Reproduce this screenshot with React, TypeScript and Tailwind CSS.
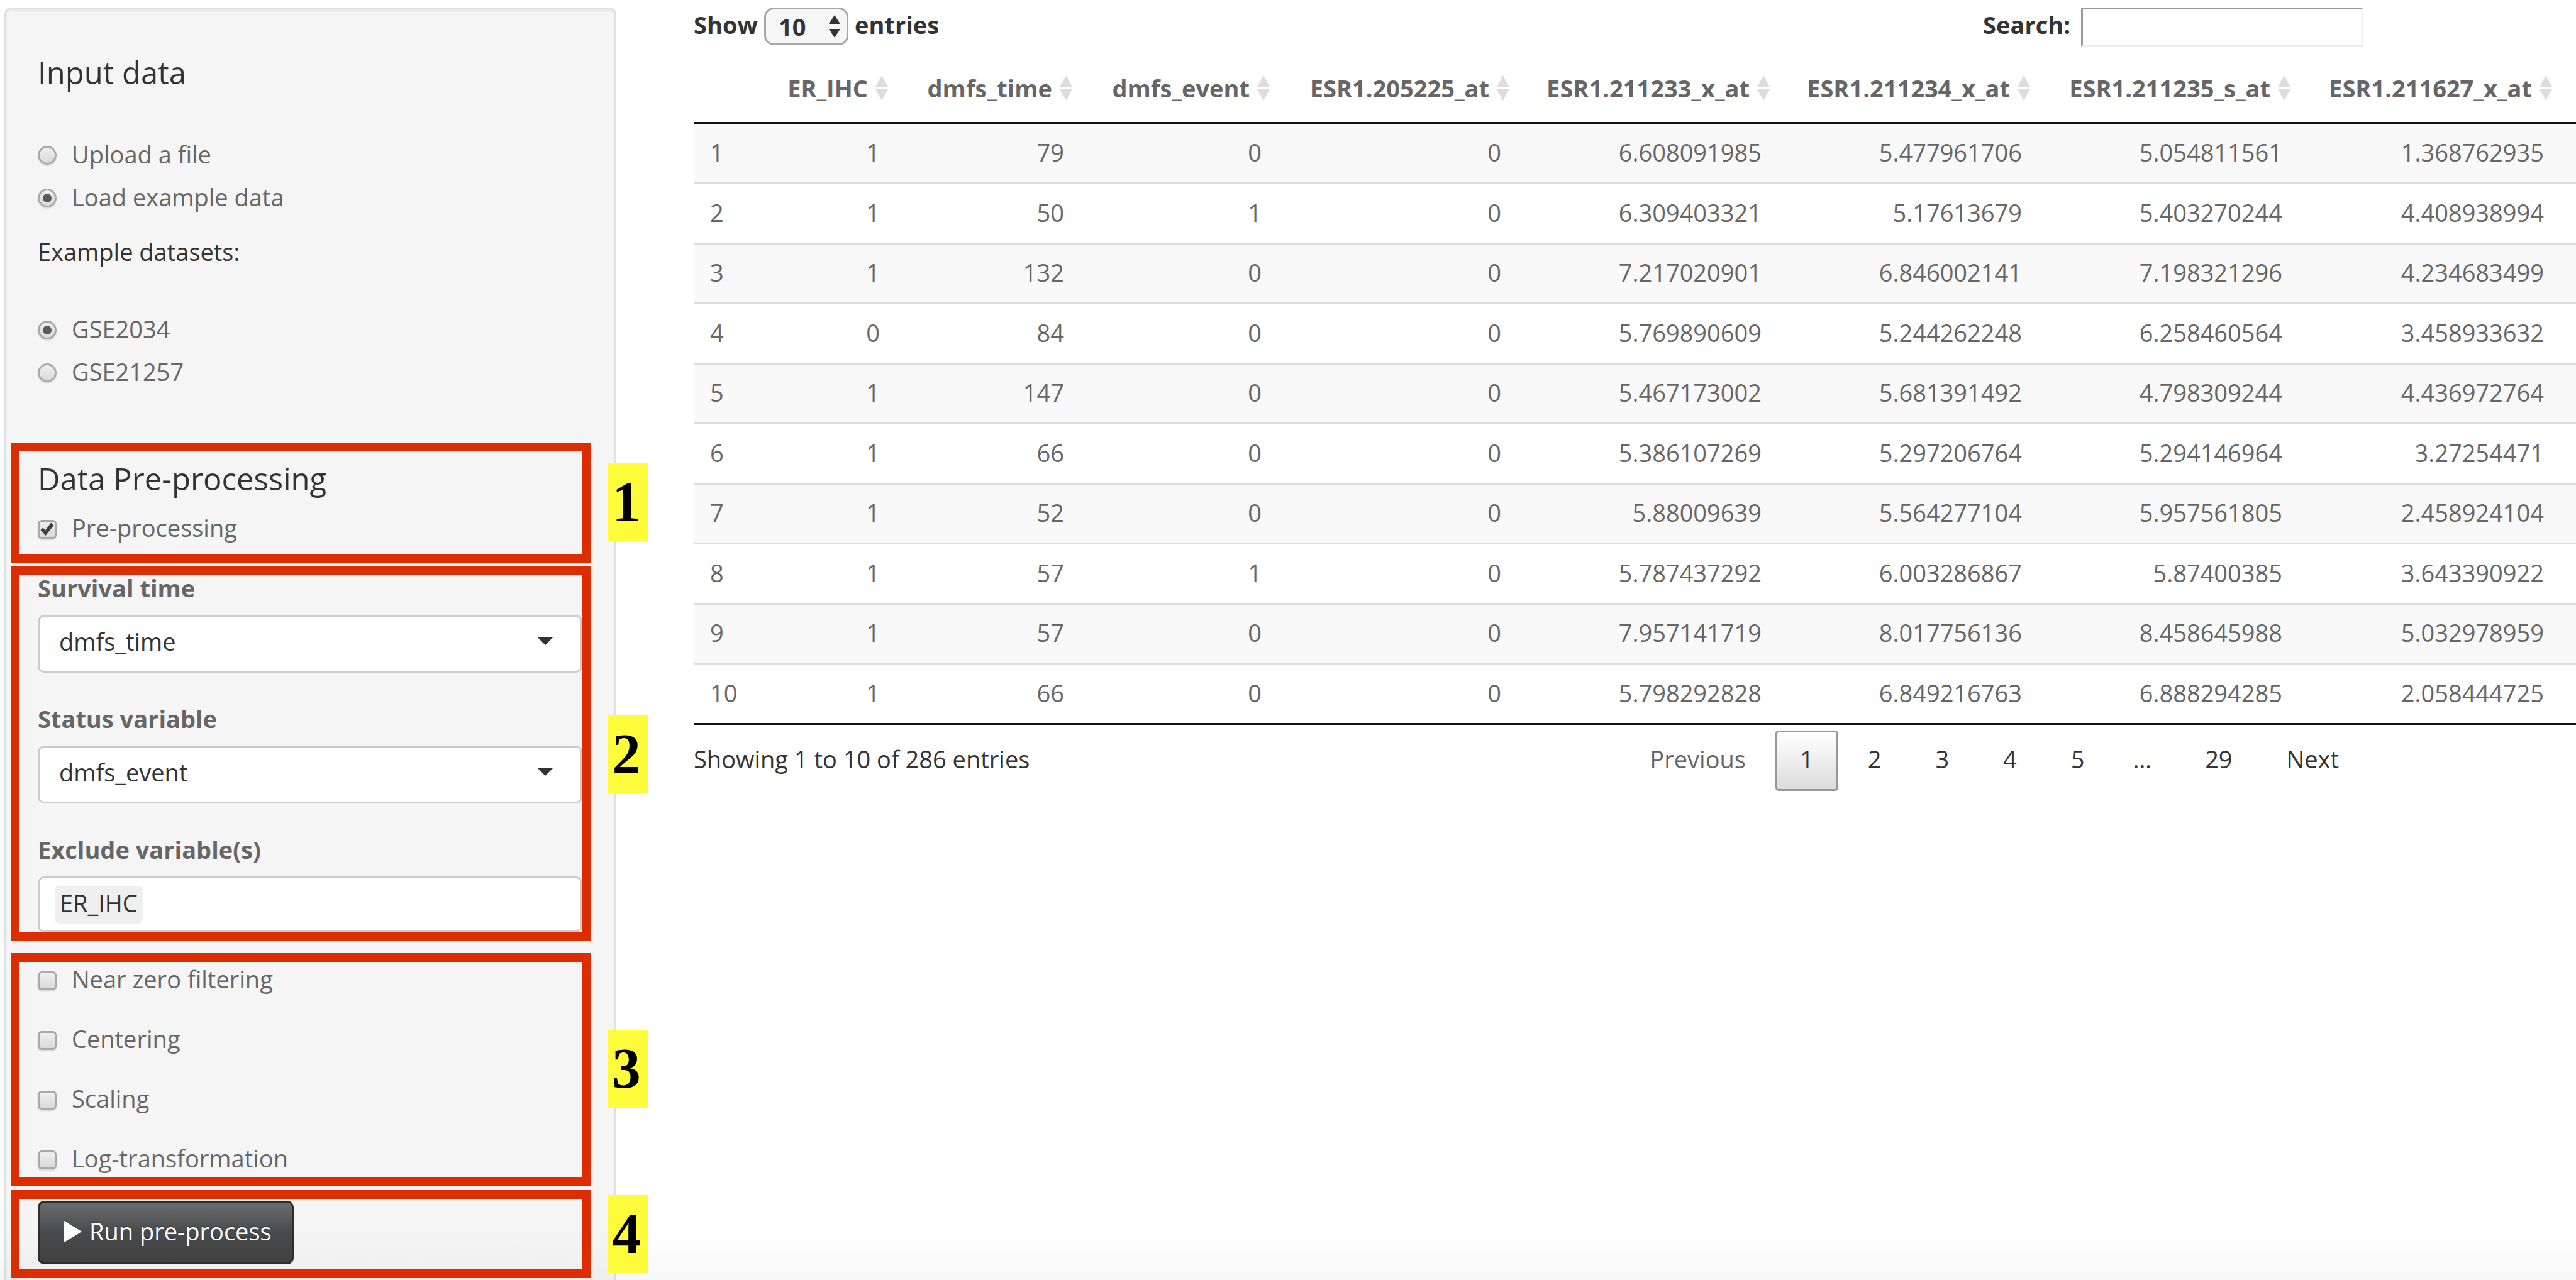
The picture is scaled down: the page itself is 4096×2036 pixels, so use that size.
import { useState, type ReactNode } from "react";

const columns = [
  { name: "ER_IHC", width: "w-[218px]" },
  { name: "dmfs_time", width: "w-[293px]" },
  { name: "dmfs_event", width: "w-[314px]" },
  { name: "ESR1.205225_at", width: "w-[381px]" },
  { name: "ESR1.211233_x_at", width: "w-[414px]" },
  { name: "ESR1.211234_x_at", width: "w-[414px]" },
  { name: "ESR1.211235_s_at", width: "w-[414px]" },
  { name: "ESR1.211627_x_at", width: "w-[416px]" },
];

const rows = [
  ["1", "79", "0", "0", "6.608091985", "5.477961706", "5.054811561", "1.368762935"],
  ["1", "50", "1", "0", "6.309403321", "5.17613679", "5.403270244", "4.408938994"],
  ["1", "132", "0", "0", "7.217020901", "6.846002141", "7.198321296", "4.234683499"],
  ["0", "84", "0", "0", "5.769890609", "5.244262248", "6.258460564", "3.458933632"],
  ["1", "147", "0", "0", "5.467173002", "5.681391492", "4.798309244", "4.436972764"],
  ["1", "66", "0", "0", "5.386107269", "5.297206764", "5.294146964", "3.27254471"],
  ["1", "52", "0", "0", "5.88009639", "5.564277104", "5.957561805", "2.458924104"],
  ["1", "57", "1", "0", "5.787437292", "6.003286867", "5.87400385", "3.643390922"],
  ["1", "57", "0", "0", "7.957141719", "8.017756136", "8.458645988", "5.032978959"],
  ["1", "66", "0", "0", "5.798292828", "6.849216763", "6.888294285", "2.058444725"],
];

function Radio({ name, label, checked, onChange }: { name: string; label: string; checked: boolean; onChange: () => void }) {
  return (
    <label className="flex h-[68px] items-center gap-6 text-[#666]">
      <span className="relative mt-1 block size-[30px]">
        <input
          type="radio"
          name={name}
          checked={checked}
          onChange={onChange}
          className="block size-[30px] appearance-none rounded-full border-3 border-[#a9a9a9] bg-linear-to-b from-[#efefef] to-[#dadada] shadow-[0_2px_2px_rgba(0,0,0,0.12)]"
        />
        {checked && <span className="pointer-events-none absolute inset-[8px] rounded-full bg-[#5c5c5c]" />}
      </span>
      {label}
    </label>
  );
}

function Check({ label, initial = false }: { label: string; initial?: boolean }) {
  const [checked, setChecked] = useState(initial);
  return (
    <label className="flex h-[54px] items-center gap-6 text-[#666]">
      <span className="relative mt-1.5 block size-[30px]">
        <input
          type="checkbox"
          checked={checked}
          onChange={(e) => setChecked(e.target.checked)}
          className="block size-[30px] appearance-none rounded-[6px] border-3 border-[#a9a9a9] bg-linear-to-b from-[#efefef] to-[#dadada] shadow-[0_2px_2px_rgba(0,0,0,0.12)]"
        />
        {checked && (
          <svg viewBox="0 0 30 30" className="pointer-events-none absolute inset-0 size-[30px]">
            <path d="M4.5 16L8.5 12.5L12 16.5L21 4.5L25.5 8.5L12.5 25Z" fill="#404040" />
          </svg>
        )}
      </span>
      {label}
    </label>
  );
}

function Dropdown({ id, label, value }: { id: string; label: string; value: string }) {
  return (
    <div className="mb-[53px]">
      <label htmlFor={id} className="mb-[23px] block font-bold leading-[40px] text-[#666]">
        {label}
      </label>
      <div className="relative">
        <select
          id={id}
          defaultValue={value}
          className="block h-[92px] w-full appearance-none rounded-[10px] border-3 border-[#ccc] bg-white pb-2 pl-[31px] text-[#333]"
        >
          <option>dmfs_time</option>
          <option>dmfs_event</option>
        </select>
        <svg viewBox="0 0 24 12" className="pointer-events-none absolute top-[36px] right-[47px] h-[12px] w-[24px]">
          <path d="M0 0H24L12 12Z" fill="#333" />
        </svg>
      </div>
    </div>
  );
}

function Marked({ number, badge, className, children }: { number: string; badge: string; className: string; children: ReactNode }) {
  return (
    <section className={`relative border-[14px] border-[#dd2c00] pl-[29px] ${className}`}>
      {children}
      <span
        className={`absolute right-[-104px] w-[64px] bg-[#fffc3b] pr-1 text-center font-['Liberation_Serif',serif] text-[91px] leading-[124px] font-bold text-black ${badge}`}
      >
        {number}
      </span>
    </section>
  );
}

function PageButton({ label, current = false, muted = false }: { label: string; current?: boolean; muted?: boolean }) {
  return (
    <button
      type="button"
      className={`ml-2 h-[96px] rounded-[5px] border-3 px-[36px] pb-1.5 ${
        current ? "border-[#979797] bg-linear-to-b from-white to-[#dcdcdc]" : "border-transparent"
      } ${muted ? "text-[#666]" : "text-[#333]"}`}
    >
      {label}
    </button>
  );
}

export default function App() {
  const [source, setSource] = useState("example");
  const [dataset, setDataset] = useState("GSE2034");

  return (
    <div className="relative flex min-h-screen items-stretch overflow-hidden bg-white pl-[7px] font-['Open_Sans',sans-serif] text-[38px] text-[#333]">
      <div className="pointer-events-none absolute inset-x-0 bottom-0 h-[80px] bg-linear-to-b from-transparent to-black/3" />
      <aside className="mt-3 w-[973px] shrink-0 rounded-t-[10px] border-3 border-b-0 border-[#e1e1e1] bg-[#f5f5f5] pt-[68px] pr-[37px] pb-[3px] pl-[7px] shadow-[inset_0_3px_3px_rgba(0,0,0,0.05)]">
        <div className="mb-[79px] pl-[43px]">
          <h2 className="mb-[64px] text-[49px] leading-[64px]">Input data</h2>
          <Radio name="source" label="Upload a file" checked={source === "upload"} onChange={() => setSource("upload")} />
          <Radio name="source" label="Load example data" checked={source === "example"} onChange={() => setSource("example")} />
          <p className="mt-[25px] mb-[61px] leading-[56px]">Example datasets:</p>
          <Radio name="dataset" label="GSE2034" checked={dataset === "GSE2034"} onChange={() => setDataset("GSE2034")} />
          <Radio name="dataset" label="GSE21257" checked={dataset === "GSE21257"} onChange={() => setDataset("GSE21257")} />
        </div>

        <Marked number="1" badge="top-[19px]" className="mb-[5px] pt-[11px] pb-4">
          <h2 className="mb-[19px] text-[49px] leading-[64px]">Data Pre-processing</h2>
          <Check label="Pre-processing" initial />
        </Marked>

        <Marked number="2" badge="top-[223px]" className="mb-[19px]">
          <Dropdown id="survival" label="Survival time" value="dmfs_time" />
          <Dropdown id="status" label="Status variable" value="dmfs_event" />
          <label htmlFor="exclude" className="mb-[23px] block font-bold leading-[40px] text-[#666]">
            Exclude variable(s)
          </label>
          <div className="flex h-[89px] items-start rounded-[10px] border-3 border-[#ccc] bg-white pt-3 pl-6">
            <span className="rounded-[8px] bg-[#efefef] px-2 pb-1.5 leading-[54px]">ER_IHC</span>
            <input id="exclude" type="text" className="h-[60px] min-w-0 flex-1 bg-transparent px-2 outline-none" />
          </div>
        </Marked>

        <Marked number="3" badge="top-[108px]" className="mb-[7px] flex flex-col gap-[41px] pb-[3px]">
          <Check label="Near zero filtering" />
          <Check label="Centering" />
          <Check label="Scaling" />
          <Check label="Log-transformation" />
        </Marked>

        <Marked number="4" badge="top-[-6px]" className="pt-[3px] pb-2">
          <button
            type="button"
            className="flex h-[101px] items-center gap-3 rounded-[10px] border-3 border-[#2e2e2e] bg-linear-to-b from-[#6b6c6e] via-[#494a4b] to-[#404040] pr-[32px] pb-1 pl-[39px] text-white [text-shadow:0_-2px_0_rgba(0,0,0,0.25)]"
          >
            <svg viewBox="0 0 28 34" className="h-[34px] w-[28px]">
              <path d="M0 0L28 17L0 34Z" fill="#fff" />
            </svg>
            Run pre-process
          </button>
        </Marked>
      </aside>

      <main className="min-w-0 flex-1 pt-3 pl-[123px]">
        <div className="mr-[338px] flex items-start justify-between font-bold leading-[54px]">
          <label className="flex gap-[10px]">
            Show
            <span className="relative">
              <select className="block h-[60px] w-[134px] appearance-none rounded-[15px] border-3 border-[#a6a6a6] bg-[#f6f6f6] pb-2 pl-[20px] font-bold">
                <option>10</option>
                <option>25</option>
              </select>
              <svg viewBox="0 0 18 36" className="pointer-events-none absolute top-[12px] right-[13px] h-[36px] w-[18px]">
                <path d="M9 0L18 14H0ZM9 36L0 22H18Z" fill="#333" />
              </svg>
            </span>
            entries
          </label>
          <label className="flex gap-[17px]">
            Search:
            <input
              type="search"
              className="h-[62px] w-[449px] border-3 border-t-[#9a9a9a] border-r-[#eee] border-b-[#eee] border-l-[#9a9a9a] bg-white font-normal outline-none"
            />
          </label>
        </div>

        <table className="w-full table-fixed border-separate border-spacing-0 border-b-3 border-[#111] text-right text-[#666]">
          <thead>
            <tr>
              <th className="w-[104px] border-b-3 border-[#111]" />
              {columns.map((c) => (
                <th key={c.name} scope="col" className={`border-b-3 border-[#111] pt-[39px] pr-[13px] pb-[27px] leading-[54px] font-bold ${c.width}`}>
                  <button type="button" className="flex w-full items-center justify-end gap-3">
                    <span>{c.name}</span>
                    <svg viewBox="0 0 20 40" className="h-[40px] w-[20px] shrink-0">
                      <path d="M10 0L20 18H0ZM10 40L0 22H20Z" fill="#ddd" />
                    </svg>
                  </button>
                </th>
              ))}
              <th className="border-b-3 border-[#111]" />
            </tr>
          </thead>
          <tbody className="leading-[54px] [&>tr:first-child>td]:border-t-0">
            {rows.map((row, i) => (
              <tr
                key={i}
                className={`odd:bg-[#f9f9f9] [&>td]:border-t-3 [&>td]:border-[#ddd] ${
                  i === 0 ? "h-[93px]" : i % 2 ? "h-[96px]" : "h-[95px]"
                }`}
              >
                <td className="pb-1 pl-[26px] text-left">{i + 1}</td>
                {row.map((value, j) => (
                  <td key={j} className="pr-[26px] pb-1">
                    {value}
                  </td>
                ))}
                <td />
              </tr>
            ))}
          </tbody>
        </table>

        <div className="mt-[9px] mr-[338px] flex items-start justify-between">
          <p className="pb-1.5 leading-[90px]">Showing 1 to 10 of 286 entries</p>
          <nav className="flex" aria-label="Table pages">
            <PageButton label="Previous" muted />
            <PageButton label="1" current />
            <PageButton label="2" />
            <PageButton label="3" />
            <PageButton label="4" />
            <PageButton label="5" />
            <span className="px-[38px] leading-[90px]">…</span>
            <PageButton label="29" />
            <PageButton label="Next" />
          </nav>
        </div>
      </main>
    </div>
  );
}
